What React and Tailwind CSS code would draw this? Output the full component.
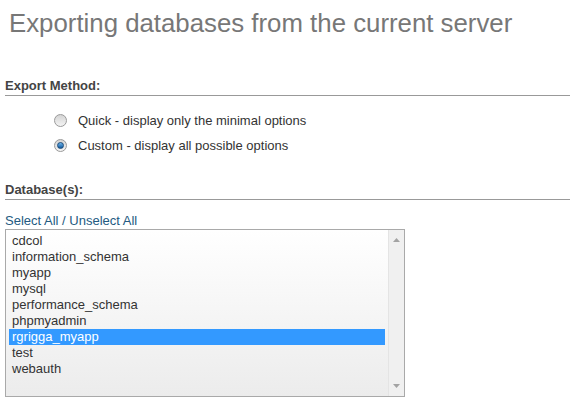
import React from 'react';

const databases = [
  'cdcol',
  'information_schema',
  'myapp',
  'mysql',
  'performance_schema',
  'phpmyadmin',
  'rgrigga_myapp',
  'test',
  'webauth'
];

const Radio = ({ checked }) => (
  <span className="relative flex h-[13px] w-[13px] shrink-0 items-center justify-center rounded-full border border-[#9a9a9a] bg-gradient-to-b from-[#d4d4d4] to-[#f4f4f4]">
    {checked && (
      <span className="h-[7px] w-[7px] rounded-full border border-[#1a4a7a] bg-gradient-to-b from-[#6cb4ea] to-[#0d5a9e]" />
    )}
  </span>
);

const SectionTitle = ({ children, className = '' }) => (
  <h3 className={`ml-[5px] border-b border-[#999] pb-[1px] text-[13px] font-bold leading-[16px] text-[#444] ${className}`}>
    {children}
  </h3>
);

export default function App() {
  return (
    <div className="h-[405px] w-[570px] overflow-hidden bg-white font-['Liberation_Sans',Arial,sans-serif] text-[13px] text-[#333]">
      <h2 className="ml-[9px] mt-[8px] whitespace-nowrap text-[25.8px] leading-[30px] text-[#777]">
        Exporting databases from the current server
      </h2>

      <SectionTitle className="mt-[40px]">Export Method:</SectionTitle>

      <div className="ml-[54px] mt-[12px] flex flex-col">
        <label className="flex h-[25px] items-center gap-[11px]">
          <Radio />
          <span className="leading-[16px] text-[#333]">Quick - display only the minimal options</span>
        </label>
        <label className="flex h-[25px] items-center gap-[11px]">
          <Radio checked />
          <span className="leading-[16px] text-[#333]">Custom - display all possible options</span>
        </label>
      </div>

      <SectionTitle className="mt-[24px]">Database(s):</SectionTitle>

      <div className="ml-[5px] mt-[13px]">
        <a className="block leading-[16px] text-[#235a81]" href="#select">
          Select All / Unselect All
        </a>
        <div className="flex h-[168px] w-[400px] border border-[#a9a9a9] bg-gradient-to-b from-white to-[#ececec]">
          <ul className="flex-1 pl-[3px] pr-[3px] pt-[3px]">
            {databases.map((db) => (
              <li
                key={db}
                className={`h-[16px] pl-[3px] leading-[16px] ${
                  db === 'rgrigga_myapp' ? 'bg-[#3399ff] text-white' : 'text-[#333]'
                }`}
              >
                {db}
              </li>
            ))}
          </ul>
          <div className="flex w-[16px] flex-col items-center justify-between border-l border-[#e4e4e4] bg-[#f0f0f0] py-[8px]">
            <svg width="7" height="4" viewBox="0 0 7 4" aria-hidden="true">
              <path d="M3.5 0L7 4H0z" fill="#a3a3a3" />
            </svg>
            <svg width="7" height="4" viewBox="0 0 7 4" aria-hidden="true">
              <path d="M0 0h7L3.5 4z" fill="#a3a3a3" />
            </svg>
          </div>
        </div>
      </div>
    </div>
  );
}
